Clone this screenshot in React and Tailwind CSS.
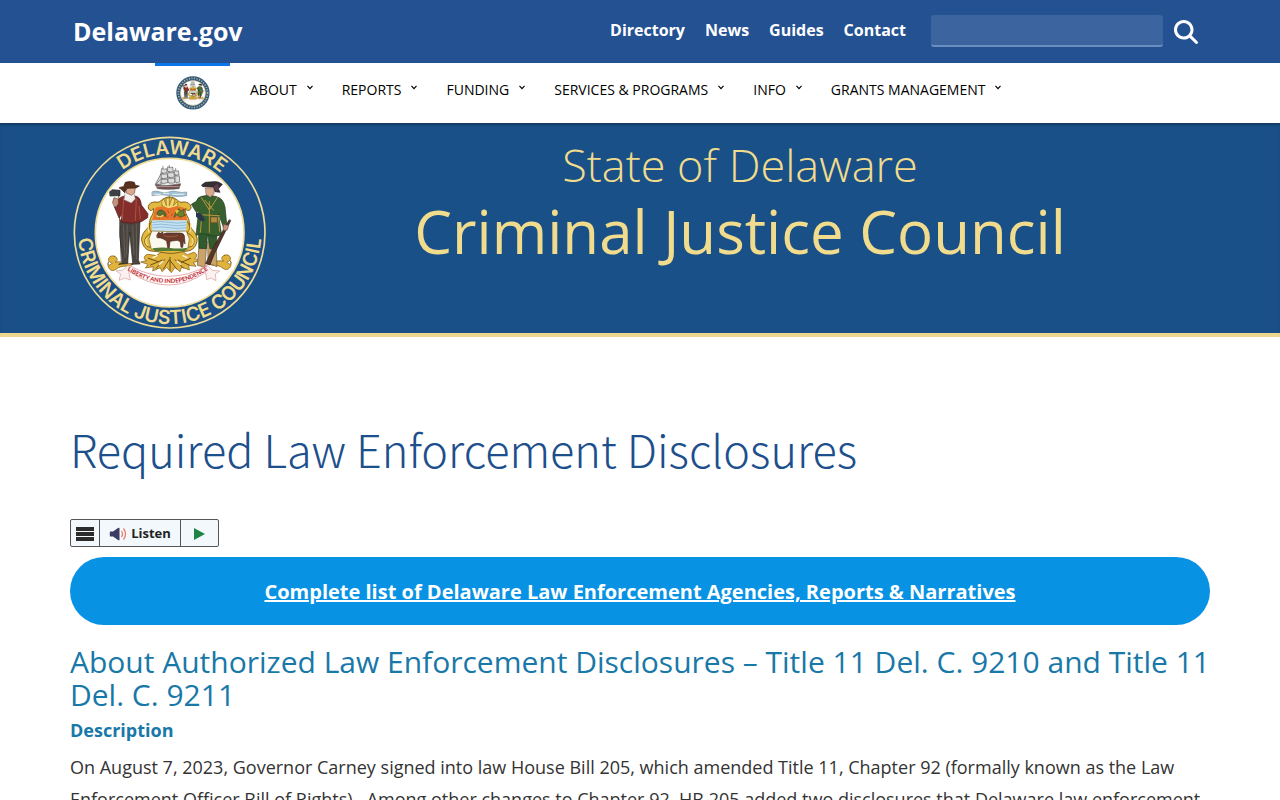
import { FaMagnifyingGlass } from 'react-icons/fa6';

const topLinks = ['Directory', 'News', 'Guides', 'Contact'];

const navItems = ['About', 'Reports', 'Funding', 'Services & Programs', 'Info', 'Grants Management'];

// Coat of arms shared by the large and the small seal
function Arms() {
  return (
    <g strokeLinejoin="round" strokeLinecap="round">
      {/* Ship */}
      <g fill="#dcdcdc" stroke="#5a5a5a" strokeWidth="2">
        <path d="M309 124l-2 50M328 121v54M347 130l2 44" fill="none" />
        <path d="M306 131q7 4 14 0l1 12q-9 4-17 0z" />
        <path d="M304 146q8 4 18 0l1 13q-11 4-21 0z" />
        <path d="M301 162q9 4 22 0l1 11q-13 5-25 0z" />
        <path d="M324 126q7 4 14 0l2 13q-9 4-17 0z" />
        <path d="M325 142q8 4 17 0l1 14q-9 4-19 0z" />
        <path d="M325 159q8 4 19 0l1 14q-10 4-20 0z" />
        <path d="M344 137q7 3 11 0l2 12q-7 4-13 0z" />
        <path d="M346 152q7 3 12 0l1 19q-7 4-13 0z" />
        <path d="M303 146l-17 32h16zM300 164l-12 14" />
        <path d="M287 179q35 6 75-3l-5 15q-34 4-64 0z" fill="#70494a" />
        <path d="M291 185h66" stroke="#d8c5c5" />
      </g>
      <path d="M277 200q12-4 24 1t25 0 25-1 29 1v11q-25 5-50 0t-53 0z" fill="#9dc3dc" stroke="#6d7c85" strokeWidth="1.5" />
      <path d="M283 208h18M310 205h16M338 208h34" stroke="#f5f0e0" strokeWidth="3" />

      {/* Scroll base */}
      <g fill="#e0b33c" stroke="#775815" strokeWidth="2">
        <path d="M164 394c-20-8-26 19-7 20-9 11-17 6-11-4-8 16 7 35 22 23 18-16 39-4 53-17-18 2-35-9-55-5 8-3 8-14-2-17z" />
        <path d="M493 391c20-8 26 19 7 20 9 11 17 6 11-4 8 16-7 35-22 23-18-16-39-4-53-17 18 2 35-9 55-5-8-3-8-14 2-17z" />
        <path d="M262 388c-12 3-12 17-2 19l-18 4 22 7-8 11 24-4-2 13 23-10 5 12 14-13 14 16 11-16 15 13 5-14 23 9-2-14 22 3-8-12 24-5-20-6c9-5 7-18-4-19l-18 7-24-16-21 8-22-8-25 18z" />
      </g>
      <path
        d="M265 400l30 10M272 420l35-15M288 430l26-26M310 432l18-28 22 28M392 400l-28 12M387 420l-33-15M371 430l-26-26M330 397v39"
        stroke="#6d4f12"
        strokeWidth="3"
        fill="none"
      />
      <path d="M279 398l12-6M299 418l10-9M361 418l-10-9M381 398l-12-6" stroke="#fff7dd" strokeWidth="4" />

      {/* Shield frame */}
      <path d="M328 216c-18 0-24 13-34 16-17-4-31 4-29 17 2 10 15 9 15 1 5 16-12 25-11 43 0 17-18 22-23 42-5 18 9 41 27 43 23 1 33 5 54 7s34-6 57-7c18-2 32-25 26-43-5-18-22-25-22-42 0-18-17-27-11-43 0 8 14 9 16-1 1-13-13-21-30-17-10-3-17-16-35-16z" fill="#e4b940" stroke="#80611d" strokeWidth="3" />
      <path d="M277 286q-18 22 0 38-24 8-23 28 4 18 20 14M379 286q20 22 2 38 22 8 21 28-4 18-20 14" fill="none" stroke="#80611d" strokeWidth="3" />
      <path d="M265 296q-1 16 2 24M260 340q-6 12 2 20M392 296q1 16-2 24M397 340q6 12-2 20" fill="none" stroke="#f8e08a" strokeWidth="4" />
      <path d="M307 242q-6-15 5-20l7 20-1-23h10v23l8-23 9 5-5 18 12-12 2 13-22 9q-17 0-25-10z" fill="#f3d770" stroke="#8a6b20" strokeWidth="2" />
      <path d="M286 248q20-8 40 2 26-10 47-1l9 37H276z" fill="#e8742c" />
      <path d="M275 286h106l-3 33q-50 4-102 0z" fill="#c5e2f0" />
      <path d="M278 292q25-5 50 0t50 0M278 300q25-5 50 0t50 0M278 308q25-5 50 0t50 0" fill="none" stroke="#86b3d2" strokeWidth="2.5" />
      <path d="M276 318q52 3 103 0l9 24-5 31H274l-7-30z" fill="#fbf9ee" stroke="#80611d" strokeWidth="2" />
      <path d="M277 370q30-5 54-1t52-1l-8 10H285z" fill="#557a35" />
      <path d="M291 265q5-15 18-8 12 6 9 18l-12-7-8 11z" fill="#587331" stroke="#3b4820" strokeWidth="2" />
      <path d="M291 272q8 8 18-1" fill="none" stroke="#f2d267" strokeWidth="4" />
      <path d="M343 273q4-19 14-22l5 8 11-7-2 14 6 4-17 7-9-8-8 8z" fill="#6a842c" stroke="#3b4820" strokeWidth="2" />
      <path d="M345 258q7-8 12 0l-7 8z" fill="#e6c43b" />
      <path d="M323 257l3 6M334 272l4-5M321 278l3-3" stroke="#9c3d19" strokeWidth="2" />

      {/* Ox */}
      <path d="M291 329l5-7 5 3 8-4-2 7 12-4h40q12-1 14 8l2 25-4-12-3 22h-5l-2-17-9-4-22 3-2 19h-5l-3-20-10-6-8-3-10-1z" fill="#6e3a29" stroke="#44261e" strokeWidth="2" />
      <path d="M312 332q15 7 40 0" fill="none" stroke="#985b43" strokeWidth="3" />

      {/* Farmer */}
      <path d="M176 205l8 205" stroke="#6a5143" strokeWidth="3" />
      <path d="M149 200l8-6 23 2v16l-29 1z" fill="#3d4146" stroke="#24272a" strokeWidth="2" />
      <path d="M182 285q-5 43-1 63l7 65-12 5 27-2 6-94 9 91-4 5 26-1-5-12 5-120z" fill="#4b4541" stroke="#28221f" strokeWidth="2" />
      <path d="M190 300l5 98M229 297l1 105M218 302l4 88M202 300l-2 90" stroke="#706862" strokeWidth="2" />
      <path d="M184 216q-18 11-13 31l-8-2 14 34 9-11-3 23q30 8 61-1l19-12 1-12-20-26q-2-22-15-26l-20-5z" fill="#832e2b" stroke="#4d1b1b" strokeWidth="2" />
      <path d="M191 222l-4 62M229 222l-3 64M237 244l4 37" stroke="#ad5140" strokeWidth="3" />
      <path d="M158 232l4-14 13 4v16l-10 9z" fill="#c7927c" stroke="#62413b" strokeWidth="2" />
      <path d="M197 202l24-2 5 22-12 12-22-10z" fill="#f4eeea" stroke="#888" strokeWidth="1.5" />
      <path d="M200 188l26-1-2 16-9 8-14-6z" fill="#d9a88d" stroke="#5b3e33" strokeWidth="1.5" />
      <path d="M178 188q6-3 13-3l5-13q13-5 27 0l3 9 12 2-10 6-27 1-7 13-9-9z" fill="#59301e" stroke="#321c13" strokeWidth="2" />

      {/* Rifleman */}
      <path d="M418 350l-6 71 23 6 5-69zM443 350l1 64 27 11-3-73z" fill="#cba46c" stroke="#6f5332" strokeWidth="2" />
      <path d="M415 302l2 68 22 1 4-45 7 46 20-2 1-70z" fill="#315b2d" stroke="#1d371c" strokeWidth="2" />
      <path d="M425 214q-12 2-16 15l-15 9 15 24 7-5-8 74q23-9 35-2 18 8 42 1l-10-64 16 42 10-2-6-60q-5-26-25-31l-22-5z" fill="#37602e" stroke="#1f3a1d" strokeWidth="2" />
      <path d="M424 218l24 37 24-37M448 230v92M413 269l65 3M425 278l-4 44M475 276l4 43M435 226l26 30" fill="none" stroke="#b9973d" strokeWidth="3" />
      <path d="M453 276h19v17h-19z" fill="#b68a3e" stroke="#6d5022" strokeWidth="2" />
      <path d="M408 261l18 7 9 17-9 5-18-15z" fill="#27384a" />
      <path d="M437 189l26-1-1 18-11 11-12-8z" fill="#d9a88d" stroke="#5b3e33" strokeWidth="1.5" />
      <path d="M425 180l11-8 25-2q14-2 26 8l-12 13 5 11-15-2-4-14-32-1z" fill="#372e30" stroke="#201a1c" strokeWidth="2" />
      <path d="M461 184l8 17 9-11-5-14z" fill="#613b50" />
      <path d="M512 287l-49 100-13 32-13-3 16-36 54-95z" fill="#56372a" stroke="#2d201a" strokeWidth="2" />
      <path d="M490 298l16 3-4 14-11 2z" fill="#c7927c" stroke="#62413b" strokeWidth="1.5" />

      {/* Motto ribbon */}
      <path d="M206 420q56 37 119 37t116-36q-60 60-116 60t-119-61z" fill="#fff" stroke="none" />
      <path d="M206 420q56 34 119 34t116-33M211 442q56 38 114 38t110-37" fill="none" stroke="#d78885" strokeWidth="2" />
      <path d="M206 420l-18 15-20 3 14 9-5 19 17-7 17 6-4-21zM441 421l16 15 22 2-13 9 2 20-15-8-13 5-3-20z" fill="#fbf1f0" stroke="#d99b9a" strokeWidth="2" />
    </g>
  );
}

function CouncilSeal() {
  return (
    <svg viewBox="39 33 582 582" className="size-[194px]" role="img" aria-label="Delaware Criminal Justice Council seal">
      <defs>
        <path id="seal-top" d="M94 323A235 235 0 0 1 564 323" />
        <path id="seal-bottom" d="M70 230A275 275 0 1 0 588 230" />
        <path id="seal-motto" d="M202 435Q260 474 325 474T444 434" />
      </defs>
      <circle cx="329" cy="323" r="286" fill="#1b4f88" stroke="#eedc95" strokeWidth="5" />
      <circle cx="329" cy="323" r="223" fill="#fff" stroke="#eedc95" strokeWidth="5" />
      <Arms />
      <g fill="#f0dc8c" fontFamily="Inter, sans-serif" fontWeight="600" textAnchor="middle">
        <text fontSize="58">
          <textPath href="#seal-top" startOffset="51%">DELAWARE</textPath>
        </text>
        <text fontSize="58">
          <textPath href="#seal-bottom" startOffset="50%">CRIMINAL JUSTICE COUNCIL</textPath>
        </text>
      </g>
      <text fill="#c5333a" fontFamily="Lato, sans-serif" fontWeight="900" fontSize="18" textAnchor="middle">
        <textPath href="#seal-motto" startOffset="50%">LIBERTY AND INDEPENDENCE</textPath>
      </text>
    </svg>
  );
}

function SmallSeal() {
  return (
    <svg viewBox="39 33 582 582" className="size-[34px]" aria-hidden="true">
      <circle cx="329" cy="323" r="250" fill="#fff" stroke="#35597c" strokeWidth="70" />
      <circle cx="329" cy="323" r="250" fill="none" stroke="#a9b29c" strokeWidth="30" strokeDasharray="20 24" />
      <circle cx="329" cy="323" r="212" fill="none" stroke="#d3c694" strokeWidth="10" />
      <Arms />
    </svg>
  );
}

function TopBar() {
  return (
    <header className="bg-[#245192] text-white">
      <div className="mx-auto flex h-[63px] max-w-[1140px] items-center justify-between pl-[3px] pr-3">
        <a href="#" className="text-[25px] font-bold">Delaware.gov</a>
        <div className="flex items-center pb-[2px]">
          <nav className="mr-[25px] flex gap-5 pb-[2px] text-base font-bold" aria-label="State">
            {topLinks.map((link) => (
              <a key={link} href="#">{link}</a>
            ))}
          </nav>
          <form className="flex items-center gap-[11px]" onSubmit={(e) => e.preventDefault()}>
            <input
              type="search"
              aria-label="Search this site"
              className="h-8 w-[232px] rounded-[3px] border-b-2 border-[#6b8dc0] bg-[#3c649e] px-2 text-base outline-none"
            />
            <button type="submit" aria-label="Search" className="pt-[2px]">
              <FaMagnifyingGlass className="size-6" />
            </button>
          </form>
        </div>
      </div>
    </header>
  );
}

function MainNav() {
  return (
    <nav className="bg-white" aria-label="Main">
      <div className="mx-auto flex h-[60px] max-w-[970px]">
        <a href="#" aria-label="Home" className="flex w-[75px] justify-center border-t-3 border-[#0a74ea] pt-[10px]">
          <SmallSeal />
        </a>
        <ul className="flex gap-[28px] pl-5 text-sm text-black">
          {navItems.map((item) => (
            <li key={item}>
              <a href="#" className="flex h-[54px] items-center gap-[10px] uppercase">
                {item}
                <svg viewBox="0 0 7 5" className="mb-[6px] h-[5px] w-[7px]" fill="none" stroke="currentColor" strokeWidth="1.2">
                  <path d="M.5 .8L3 3.600L5.500 .8" />
                </svg>
              </a>
            </li>
          ))}
        </ul>
      </div>
    </nav>
  );
}

function Hero() {
  return (
    <div className="border-b-4 border-[#ecd98f] bg-[#1a5088] text-[#f0dc8c] shadow-[inset_0_3px_3px_-1px_rgba(0,0,0,0.3)]">
      <div className="mx-auto flex h-[210px] max-w-[1140px]">
        <div className="w-[200px] shrink-0 pl-[3px] pt-[13px]">
          <CouncilSeal />
        </div>
        <div className="flex-1 pt-3 text-center">
          <p className="text-[45px] font-light leading-[60px]">State of Delaware</p>
          <p className="text-[60px] leading-[72px]">Criminal Justice Council</p>
        </div>
      </div>
    </div>
  );
}

function ListenBar() {
  return (
    <div className="flex h-7 w-fit divide-x divide-[#555] rounded-[2px] border border-[#555] bg-[#f3f8fd]">
      <button type="button" aria-label="Reader menu" className="flex w-[29px] items-center justify-center pt-[2px]">
        <svg viewBox="0 0 18 14" className="h-[14px] w-[18px]" fill="#2b2b2b">
          <path d="M0 0h18v4H0zM0 5h18v4H0zM0 10h18v4H0z" />
        </svg>
      </button>
      <button type="button" className="flex w-[81px] items-center justify-center gap-1 pt-[2px] text-[13px] font-bold text-[#222]">
        <svg viewBox="0 0 18 14" className="h-[14px] w-[18px]" fill="none">
          <path d="M1 4.500H4L9 1q1-.7 1.500 0v12q-.5.7-1.500 0L4 9.500H1q-.6-2.500 0-5z" fill="#3b3b63" />
          <path d="M12.500 4q2 3 0 6M14.500 1.500q4 5.500 0 11" stroke="#ee7b62" strokeWidth="1.300" />
        </svg>
        Listen
      </button>
      <button type="button" aria-label="Play" className="flex w-[37px] items-center justify-center pt-[2px]">
        <svg viewBox="0 0 11 12" className="h-3 w-[11px]">
          <path d="M0 0l11 6-11 6z" fill="#1f8443" />
        </svg>
      </button>
    </div>
  );
}

export default function App() {
  return (
    <div className="h-screen overflow-hidden bg-white font-['Open_Sans',sans-serif]">
      <TopBar />
      <MainNav />
      <Hero />
      <main className="mx-auto max-w-[1140px]">
        <h1 className="mb-9 mt-[77px] font-['Noto_Sans_CJK_SC',sans-serif] text-[45px] font-light leading-[69px] text-[#1c4f8c]">
          Required Law Enforcement Disclosures
        </h1>
        <ListenBar />
        <div className="mt-[10px] flex h-[68px] items-center justify-center rounded-full bg-[#0792e4] pt-[2px]">
          <a href="#" className="text-xl font-bold text-white underline">
            Complete list of Delaware Law Enforcement Agencies, Reports &amp; Narratives
          </a>
        </div>
        <h2 className="mt-5 text-[30px] leading-[33px] text-[#1878a8]">
          About Authorized Law Enforcement Disclosures – Title 11 Del. C. 9210 and Title 11 Del. C. 9211
        </h2>
        <h3 className="mt-[9px] text-lg font-bold leading-5 text-[#1878a8]">Description</h3>
        <p className="mt-[11px] text-lg leading-8 text-[#333]">
          On August 7, 2023, Governor Carney signed into law House Bill 205, which amended Title 11, Chapter 92 (formally
          known as the Law Enforcement Officer Bill of Rights).&nbsp; Among other changes to Chapter 92, HB 205 added two
          disclosures that Delaware law enforcement
        </p>
      </main>
    </div>
  );
}
